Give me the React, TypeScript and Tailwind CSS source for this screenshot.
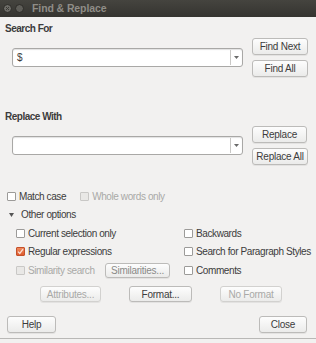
import React from "react";

const font = { fontFamily: '"Liberation Sans", Arial, sans-serif' };

const Btn = ({
  children,
  w,
  h = "h-[17px]",
  disabled,
}: {
  children: React.ReactNode;
  w: string;
  h?: string;
  disabled?: boolean;
}) => (
  <div
    className={`${w} ${h} flex items-center justify-center rounded-[3px] border border-[#bcbbb9] bg-gradient-to-b from-[#fdfdfd] to-[#ebebea] text-[10px] tracking-[-0.25px] shadow-[0_1px_0_rgba(0,0,0,0.06)] ${
      disabled ? "text-[#a9a9a7] border-[#d2d1cf]" : "text-[#3c3c3c]"
    }`}
  >
    {children}
  </div>
);

const Check = ({
  label,
  checked,
  disabled,
}: {
  label: string;
  checked?: boolean;
  disabled?: boolean;
}) => (
  <div className="flex items-center gap-[3px]">
    {checked ? (
      <div className="w-[9px] h-[9px] rounded-[1px] bg-gradient-to-b from-[#f08a5d] to-[#dd5a2b] border border-[#c4502a] flex items-center justify-center">
        <svg width="7" height="7" viewBox="0 0 7 7">
          <path d="M1 3.6 L2.8 5.4 L6 1.2" stroke="#fbe0d4" strokeWidth="1.3" fill="none" />
        </svg>
      </div>
    ) : (
      <div
        className={`w-[9px] h-[9px] rounded-[1px] border ${
          disabled ? "border-[#c9c8c6] bg-[#e9e8e6]" : "border-[#9c9b99] bg-white"
        }`}
      />
    )}
    <span className={disabled ? "text-[#a9a9a7]" : "text-[#3c3c3c]"}>{label}</span>
  </div>
);

const Combo = ({ value }: { value?: string }) => (
  <div className="w-[231px] h-[19px] flex rounded-[3px] border border-[#a9a8a6] bg-white shadow-[inset_0_1px_1px_rgba(0,0,0,0.12)]">
    <div className="flex-1 flex items-center pl-[4px] text-[10px] text-[#3c3c3c]">{value}</div>
    <div className="w-[12px] border-l border-[#c9c8c6] my-[1px] flex items-center justify-center">
      <svg width="5" height="3" viewBox="0 0 5 3">
        <path d="M0 0 L5 0 L2.5 3 Z" fill="#6a6a6a" />
      </svg>
    </div>
  </div>
);

export default function App() {
  return (
    <div style={font} className="w-[316px] h-[343px] bg-[#f2f1f0] overflow-hidden flex flex-col text-[10px] tracking-[-0.4px]">
      {/* title bar */}
      <div className="h-[17px] shrink-0 bg-gradient-to-b from-[#45443f] to-[#353430] flex items-center pl-[3px]">
        <div className="flex gap-[3px]">
          <div className="w-[9px] h-[9px] rounded-full bg-[#6d6c67] border border-[#2c2b27] flex items-center justify-center">
            <svg width="5" height="5" viewBox="0 0 5 5">
              <path d="M1 1 L4 4 M4 1 L1 4" stroke="#3a3935" strokeWidth="1" />
            </svg>
          </div>
          <div className="w-[9px] h-[9px] rounded-full bg-[#5e5d58] border border-[#2c2b27]" />
        </div>
        <span className="ml-[8px] font-bold text-[#8f8d87] text-[10.5px] tracking-[-0.1px]">Find &amp; Replace</span>
      </div>

      {/* search for */}
      <div className="mt-[5px] pl-[5px] leading-[14px] font-bold text-[#3c3c3c] tracking-[-0.5px]">Search For</div>
      <div className="mt-[2px] flex items-center pl-[12px]">
        <Combo value="$" />
        <div className="ml-[9px] flex flex-col gap-[5px]">
          <Btn w="w-[56px]">Find Next</Btn>
          <Btn w="w-[56px]">Find All</Btn>
        </div>
      </div>

      {/* replace with */}
      <div className="mt-[33px] pl-[5px] leading-[14px] font-bold text-[#3c3c3c] tracking-[-0.5px]">Replace With</div>
      <div className="mt-[2px] flex items-center pl-[12px]">
        <Combo />
        <div className="ml-[9px] flex flex-col gap-[5px]">
          <Btn w="w-[55px]">Replace</Btn>
          <Btn w="w-[56px]">Replace All</Btn>
        </div>
      </div>

      {/* options */}
      <div className="mt-[22px] flex flex-col gap-[0.5px]">
        <div className="h-[18px] flex items-center pl-[7px] gap-[14px]">
          <Check label="Match case" />
          <Check label="Whole words only" disabled />
        </div>
        <div className="h-[18px] flex items-center pl-[9px] gap-[7px] text-[#3c3c3c]">
          <svg width="5" height="4" viewBox="0 0 5 4">
            <path d="M0 0 L5 0 L2.5 4 Z" fill="#555" />
          </svg>
          <span>Other options</span>
        </div>
        <div className="h-[18px] grid grid-cols-[168px_1fr] items-center pl-[16px]">
          <Check label="Current selection only" />
          <Check label="Backwards" />
        </div>
        <div className="h-[18px] grid grid-cols-[168px_1fr] items-center pl-[16px]">
          <Check label="Regular expressions" checked />
          <Check label="Search for Paragraph Styles" />
        </div>
        <div className="h-[18px] grid grid-cols-[168px_1fr] items-center pl-[16px]">
          <div className="flex items-center">
            <div className="w-[89px]">
              <Check label="Similarity search" disabled />
            </div>
            <Btn w="w-[65px]" h="h-[15px]">
              <span className="text-[#8a8a88]">Similarities...</span>
            </Btn>
          </div>
          <Check label="Comments" />
        </div>
      </div>

      {/* attribute buttons */}
      <div className="mt-[7px] flex pl-[40px] gap-[28px]">
        <Btn w="w-[61px]" h="h-[16px]" disabled>
          Attributes...
        </Btn>
        <Btn w="w-[63px]" h="h-[16px]">
          Format...
        </Btn>
        <Btn w="w-[62px]" h="h-[16px]" disabled>
          No Format
        </Btn>
      </div>

      {/* bottom */}
      <div className="mt-[14px] flex justify-between pl-[7px] pr-[9px]">
        <Btn w="w-[49px]">Help</Btn>
        <Btn w="w-[48px]">Close</Btn>
      </div>
      <div className="mt-[5px] h-px bg-[#b9b8b6]" />
    </div>
  );
}
